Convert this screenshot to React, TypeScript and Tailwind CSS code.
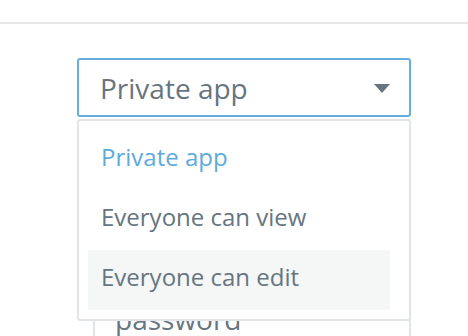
import React, { useState } from 'react';

const options = ['Private app', 'Everyone can view', 'Everyone can edit'];

const App: React.FC = () => {
  const [value] = useState('Private app');
  const [hovered] = useState('Everyone can edit');

  return (
    <div className="w-[468px] h-[336px] overflow-hidden bg-white font-['Open_Sans',sans-serif] text-[#66757f]">
      <div className="h-[24px] border-b-2 border-[#e6e6e6]" />

      <div className="pt-[34px] pl-[77px] w-[411px]">
        <div className="relative">
          {/* select */}
          <div className="h-[59px] border-2 border-[#66aee0] rounded-[3px] flex items-center justify-between pl-[21px] pr-[19px]">
            <span className="text-[28px] leading-none">{value}</span>
            <svg width="16" height="9" viewBox="0 0 16 9" className="mt-[1px]">
              <path d="M0 0h16L8 9z" fill="#66757f" />
            </svg>
          </div>

          {/* menu */}
          <div className="absolute left-0 right-0 top-[61px] z-10 bg-white border-2 border-[#e2e5e8] rounded-[3px] py-[9px] pl-[9px] pr-[19px]">
            {options.map(opt => (
              <div
                key={opt}
                className={`h-[60px] flex items-center pl-[13px] pb-[7px] text-[24px] leading-none ${
                  opt === value ? 'text-[#5eaadc]' : ''
                } ${opt === hovered ? 'bg-[#f5f7f7]' : ''}`}
              >
                {opt}
              </div>
            ))}
          </div>

          {/* field behind the menu */}
          <div className="mt-[172px] ml-[16px] h-[60px] border-2 border-[#e2e5e8] rounded-[3px] flex items-center pl-[20px]">
            <span className="text-[28px] leading-none">password</span>
          </div>
        </div>
      </div>
    </div>
  );
};

export default App;
